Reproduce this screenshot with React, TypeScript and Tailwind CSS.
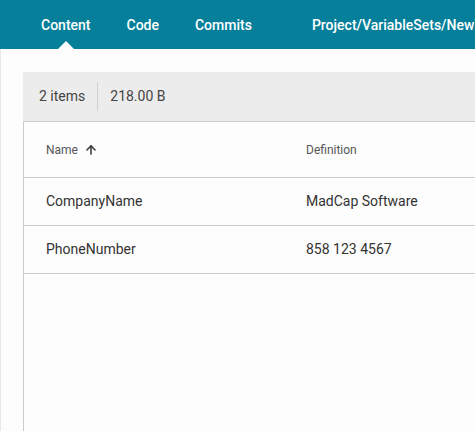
import { ArrowUp } from 'lucide-react';

const TABS = ['Content', 'Code', 'Commits'];

const ROWS = [
  { name: 'CompanyName', definition: 'MadCap Software' },
  { name: 'PhoneNumber', definition: '858 123 4567' },
];

export default function App() {
  return (
    <div className="w-[475px] h-[431px] overflow-hidden bg-[#fdfdfd] font-['Roboto',sans-serif] flex flex-col">
      {/* Top navigation */}
      <div className="h-[49px] shrink-0 bg-[#067f9b] flex items-center pl-[41px] text-white text-[14px] font-medium whitespace-nowrap">
        {TABS.map((tab, i) => (
          <div key={tab} className={`relative h-full flex items-center ${i > 0 ? 'ml-9' : ''}`}>
            <span className="mt-[2px]">{tab}</span>
            {i === 0 && (
              <span className="absolute bottom-0 left-1/2 -translate-x-1/2 w-0 h-0 border-l-[8px] border-r-[8px] border-b-[8px] border-l-transparent border-r-transparent border-b-[#fdfdfd]" />
            )}
          </div>
        ))}
        <div className="w-px h-[30px] bg-[#7fc0cf] mx-[30px]" />
        <span className="mt-[2px]">Project/VariableSets/NewVariableSet.flvar</span>
      </div>

      {/* Body */}
      <div className="flex-1 flex border-l border-[#e8e8e8]">
        <div className="flex-1 flex flex-col pt-[23px] pl-[22px]">
          <div className="h-[49px] shrink-0 bg-[#ececec] flex items-center pl-4 text-[14px] text-[#444]">
            <span>2 items</span>
            <div className="w-px h-[29px] bg-[#cfcfcf] mx-3" />
            <span>218.00 B</span>
          </div>
          <div className="flex-1 bg-[#fdfdfd] border-l border-t border-[#cccccc]">
            <div className="h-[56px] flex items-center border-b border-[#cccccc] text-[12px] text-[#555]">
              <div className="w-[282px] pl-[22px] flex items-center gap-[6px]">
                <span>Name</span>
                <ArrowUp className="w-[14px] h-[14px] text-[#444]" strokeWidth={2.75} />
              </div>
              <div>Definition</div>
            </div>
            {ROWS.map((row) => (
              <div key={row.name} className="h-[48px] flex items-center border-b border-[#cccccc] text-[14px] text-[#333]">
                <div className="w-[282px] pl-[22px]">{row.name}</div>
                <div>{row.definition}</div>
              </div>
            ))}
          </div>
        </div>
      </div>
    </div>
  );
}
